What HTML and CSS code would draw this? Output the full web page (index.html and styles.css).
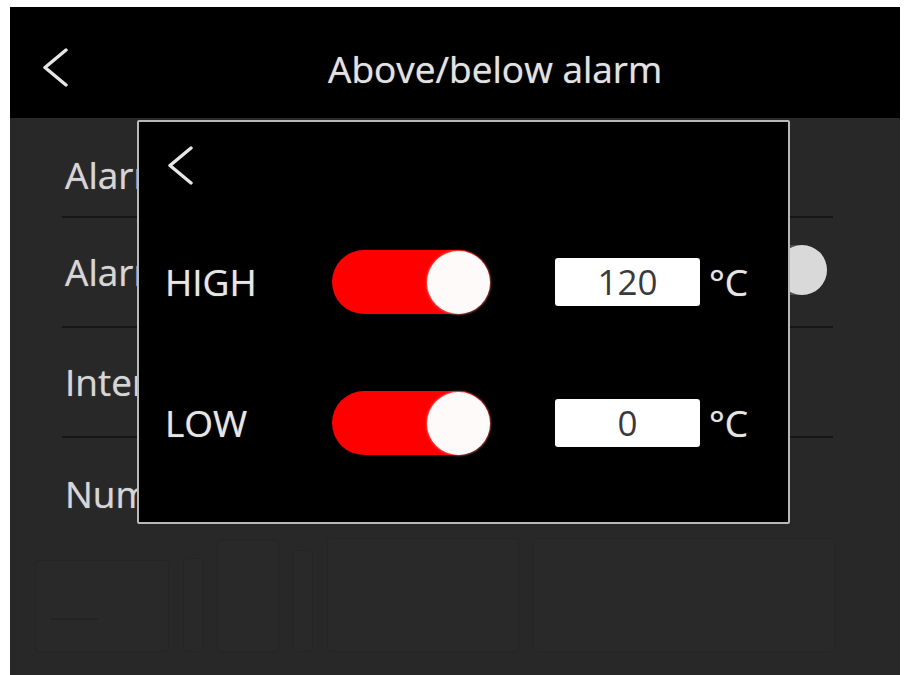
FILE: index.html
```html
<!DOCTYPE html>
<html lang="en">
<head>
<meta charset="utf-8">
<title>Above/below alarm</title>
<link rel="stylesheet" href="styles.css">
</head>
<body>
<div class="screen">
  <header class="topbar">
    <svg class="chev" width="26" height="39" viewBox="0 0 26 39"><polyline points="24,2 3,19.5 24,37" fill="none" stroke="#e6e6e6" stroke-width="3.4" stroke-linecap="round" stroke-linejoin="round"/></svg>
    <h1 class="title">Above/below alarm</h1>
  </header>
  <main class="content">
    <div class="row row-first"><span class="row-label">Alarm</span></div>
    <div class="row"><span class="row-label">Alarm</span><span class="bg-toggle"><span class="bg-knob"></span></span></div>
    <div class="row"><span class="row-label">Interval</span></div>
    <div class="row row-last"><span class="row-label">Number</span></div>
    <div class="ghost">
      <div class="ghost-box g1"><span class="ghost-bar"></span></div>
      <div class="ghost-box g2"></div>
      <div class="ghost-box g3"></div>
      <div class="ghost-box g4"></div>
      <div class="ghost-box g5"></div>
      <div class="ghost-box g6"></div>
    </div>
  </main>
  <section class="modal">
    <svg class="chev modal-chev" width="26" height="39" viewBox="0 0 26 39"><polyline points="24,2 3,19.5 24,37" fill="none" stroke="#e6e6e6" stroke-width="3.4" stroke-linecap="round" stroke-linejoin="round"/></svg>
    <div class="limits">
      <span class="lim-label">HIGH</span>
      <span class="toggle"><span class="knob"></span></span>
      <span class="value">120</span>
      <span class="unit">°C</span>
      <span class="lim-label">LOW</span>
      <span class="toggle"><span class="knob"></span></span>
      <span class="value">0</span>
      <span class="unit">°C</span>
    </div>
  </section>
</div>
</body>
</html>
```
FILE: styles.css
```css
html, body {
  margin: 0;
  padding: 0;
  background: #ffffff;
}
body {
  font-family: "Open Sans", "Noto Sans", sans-serif;
}
.screen {
  position: relative;
  margin: 7px 0 0 10px;
  width: 890px;
  height: 668px;
  background: #282828;
  overflow: hidden;
}
.topbar {
  height: 111px;
  box-sizing: border-box;
  background: #000;
  display: flex;
  align-items: flex-start;
  padding: 41px 0 0 32px;
}
.chev {
  display: block;
  flex: none;
}
.title {
  margin: 2px 0 0 260px;
  font-size: 37px;
  line-height: 1;
  font-weight: 400;
  color: #e2e2e2;
  text-shadow: 0 0 1px rgba(226, 226, 226, 0.7);
}
.content {
  display: flex;
  flex-direction: column;
}
.row {
  height: 110px;
  box-sizing: border-box;
  margin: 0 67px 0 52px;
  padding: 34px 6px 0 3px;
  border-bottom: 2px solid #161616;
  display: flex;
  justify-content: space-between;
  align-items: flex-start;
}
.row-first {
  height: 100px;
  padding-top: 37px;
}
.row-last {
  height: 86px;
  padding-top: 36px;
  border-bottom: none;
}
.row-label {
  white-space: nowrap;
  font-size: 37px;
  line-height: 1.1;
  color: #d6d6d6;
  text-shadow: 0 0 1px rgba(214, 214, 214, 0.7);
}
.bg-toggle {
  margin-top: -7px;
  width: 100px;
  height: 50px;
  border-radius: 25px;
  background: #4a4a4a;
  display: flex;
  justify-content: flex-end;
}
.bg-knob {
  width: 50px;
  height: 50px;
  border-radius: 50%;
  background: #d9d9d9;
}
.ghost {
  display: flex;
  align-items: flex-end;
  gap: 14px;
  padding: 0 0 12px 25px;
  height: 140px;
  box-sizing: border-box;
}
.ghost-box {
  border: 1px solid #252525;
  border-radius: 4px;
  background: #292929;
}
.g1 { width: 132px; height: 90px; }
.ghost-bar {
  display: block;
  margin: 33px 0 0 14px;
  width: 48px;
  height: 24px;
  border-bottom: 2px solid #242424;
}
.g2 { width: 18px; height: 92px; }
.g3 { width: 60px; height: 110px; }
.g4 { width: 18px; height: 100px; }
.g5 { width: 190px; height: 112px; }
.g6 { width: 300px; height: 112px; }

.modal {
  position: absolute;
  left: 127px;
  top: 113px;
  width: 653px;
  height: 404px;
  box-sizing: border-box;
  border: 2px solid #b8b8b8;
  border-radius: 2px;
  background: #000;
  padding: 24px 0 0 26px;
}
.modal-chev {
  margin-left: 2px;
}
.limits {
  margin-top: 65px;
  display: grid;
  grid-template-columns: 167px 158px 145px auto;
  grid-auto-rows: 64px;
  row-gap: 77px;
  align-items: center;
}
.lim-label {
  font-size: 37px;
  line-height: 1;
  color: #e6e6e6;
  text-shadow: 0 0 1px rgba(230, 230, 230, 0.7);
  margin-top: -2px;
}
.toggle {
  width: 158px;
  height: 64px;
  border-radius: 32px;
  background: #ff0000;
  display: flex;
  justify-content: flex-end;
  align-items: center;
}
.knob {
  width: 63px;
  height: 63px;
  border-radius: 50%;
  background: #fffafa;
  box-shadow: 0 0 2px 1px rgba(255, 120, 120, 0.6);
}
.value {
  width: 145px;
  height: 48px;
  box-sizing: border-box;
  background: #fff;
  border-radius: 3px;
  color: #3a3a3a;
  font-size: 35px;
  line-height: 48px;
  text-align: center;
  transform: translateX(65px);
}
.unit {
  margin-left: 74px;
  font-size: 37px;
  line-height: 1;
  color: #e6e6e6;
  text-shadow: 0 0 1px rgba(230, 230, 230, 0.7);
  margin-top: -2px;
}
```
